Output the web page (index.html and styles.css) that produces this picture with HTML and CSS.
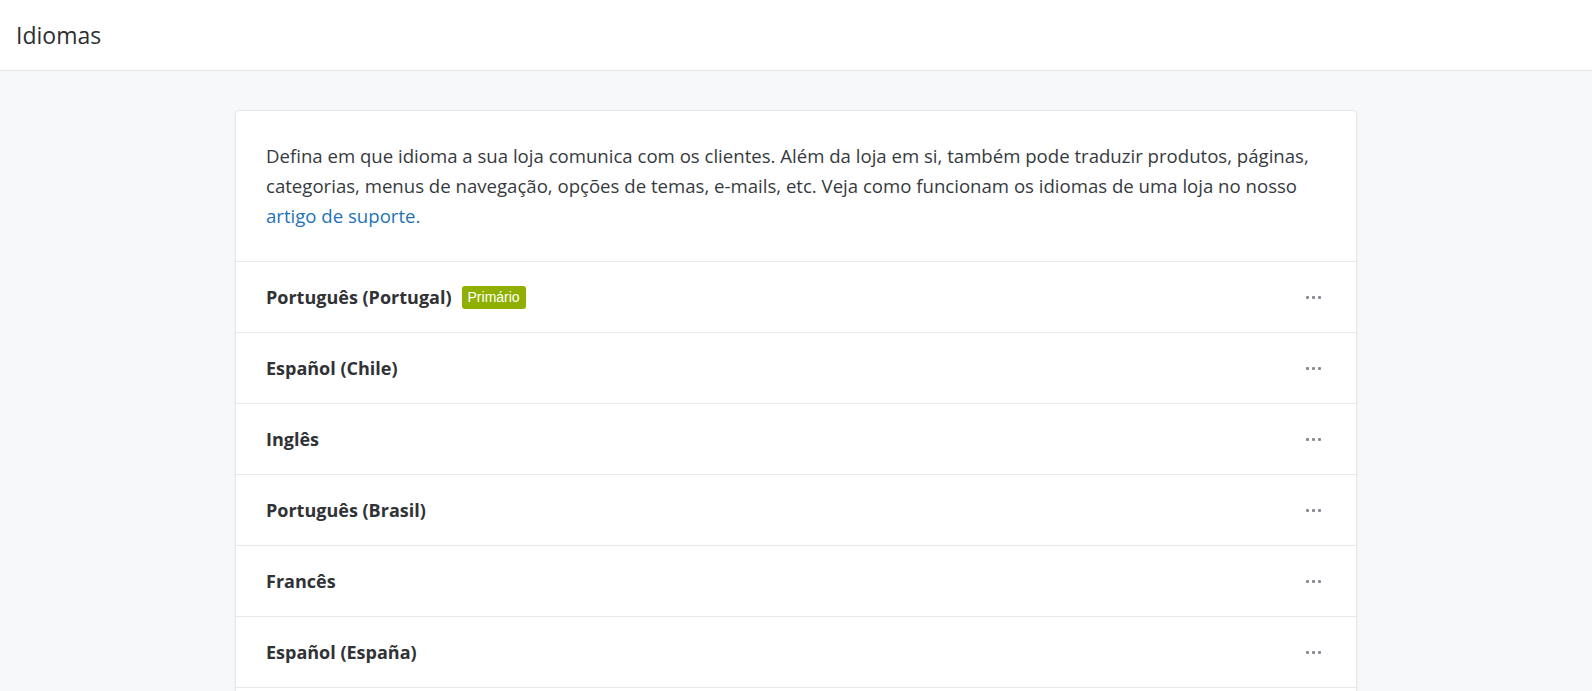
FILE: index.html
```html
<!DOCTYPE html>
<html lang="pt">
  <head>
    <meta charset="UTF-8" />
    <meta name="viewport" content="width=device-width, initial-scale=1.0" />
    <title>Idiomas</title>
    <link rel="stylesheet" href="styles.css">
  </head>
  <body>
    <header class="topbar">
      <h1 class="topbar-title">Idiomas</h1>
    </header>

    <main class="content">
      <section class="card">
        <p class="card-intro">
          Defina em que idioma a sua loja comunica com os clientes. Além da loja em si, também pode traduzir produtos, páginas, categorias, menus de navegação, opções de temas, e-mails, etc. Veja como funcionam os idiomas de uma loja no nosso <a href="#" class="link">artigo de suporte.</a>
        </p>

        <ul class="lang-list">
          <li class="lang-row">
            <span class="lang-name">Português (Portugal)</span>
            <span class="badge">Primário</span>
            <button class="more" aria-label="Mais opções">
              <svg width="15" height="3" viewBox="0 0 15 3"><rect x="0" y="0" width="3" height="3" rx="1"/><rect x="6" y="0" width="3" height="3" rx="1"/><rect x="12" y="0" width="3" height="3" rx="1"/></svg>
            </button>
          </li>
          <li class="lang-row">
            <span class="lang-name">Español (Chile)</span>
            <button class="more" aria-label="Mais opções">
              <svg width="15" height="3" viewBox="0 0 15 3"><rect x="0" y="0" width="3" height="3" rx="1"/><rect x="6" y="0" width="3" height="3" rx="1"/><rect x="12" y="0" width="3" height="3" rx="1"/></svg>
            </button>
          </li>
          <li class="lang-row">
            <span class="lang-name">Inglês</span>
            <button class="more" aria-label="Mais opções">
              <svg width="15" height="3" viewBox="0 0 15 3"><rect x="0" y="0" width="3" height="3" rx="1"/><rect x="6" y="0" width="3" height="3" rx="1"/><rect x="12" y="0" width="3" height="3" rx="1"/></svg>
            </button>
          </li>
          <li class="lang-row">
            <span class="lang-name">Português (Brasil)</span>
            <button class="more" aria-label="Mais opções">
              <svg width="15" height="3" viewBox="0 0 15 3"><rect x="0" y="0" width="3" height="3" rx="1"/><rect x="6" y="0" width="3" height="3" rx="1"/><rect x="12" y="0" width="3" height="3" rx="1"/></svg>
            </button>
          </li>
          <li class="lang-row">
            <span class="lang-name">Francês</span>
            <button class="more" aria-label="Mais opções">
              <svg width="15" height="3" viewBox="0 0 15 3"><rect x="0" y="0" width="3" height="3" rx="1"/><rect x="6" y="0" width="3" height="3" rx="1"/><rect x="12" y="0" width="3" height="3" rx="1"/></svg>
            </button>
          </li>
          <li class="lang-row">
            <span class="lang-name">Español (España)</span>
            <button class="more" aria-label="Mais opções">
              <svg width="15" height="3" viewBox="0 0 15 3"><rect x="0" y="0" width="3" height="3" rx="1"/><rect x="6" y="0" width="3" height="3" rx="1"/><rect x="12" y="0" width="3" height="3" rx="1"/></svg>
            </button>
          </li>
          <li class="lang-row lang-row-empty"></li>
        </ul>
      </section>
    </main>
  </body>
</html>
```

FILE: styles.css
```css
* {
  box-sizing: border-box;
}

body {
  margin: 0;
  font-family: "Open Sans", Arial, sans-serif;
  color: #333539;
  background-color: #f7f8fa;
}

.topbar {
  display: flex;
  align-items: center;
  height: 71px;
  padding: 0 16px;
  background: #fff;
  border-bottom: 1px solid #e4e6ea;
}

.topbar-title {
  margin: 0;
  font-size: 23px;
  font-weight: 400;
  color: #2d2f33;
}

.content {
  padding: 39px 0 40px;
}

.card {
  width: 1122px;
  margin: 0 auto;
  background: #fff;
  border: 1px solid #e4e6ea;
  border-radius: 4px;
  box-shadow: 0 1px 3px rgba(0, 0, 0, 0.06);
}

.card-intro {
  margin: 0;
  padding: 30px 30px 30px;
  font-size: 18.6px;
  line-height: 30px;
  color: #363a40;
}

.link {
  color: #1f73b7;
  text-decoration: none;
}

.lang-list {
  list-style: none;
  margin: 0;
  padding: 0;
}

.lang-row {
  display: flex;
  align-items: center;
  height: 71px;
  padding: 0 30px;
  border-top: 1px solid #e6e8eb;
}

.lang-name {
  font-size: 18px;
  font-weight: 700;
  color: #303236;
}

.badge {
  margin-left: 10px;
  padding: 2px 6px;
  background: #8fb000;
  color: #fff;
  font-family: "Liberation Sans", Arial, sans-serif;
  font-size: 14px;
  line-height: 19px;
  border-radius: 3px;
}

.more {
  margin-left: auto;
  margin-right: 5px;
  padding: 0;
  border: none;
  background: none;
  display: flex;
  cursor: pointer;
}

.more svg {
  fill: #868b93;
}
```
